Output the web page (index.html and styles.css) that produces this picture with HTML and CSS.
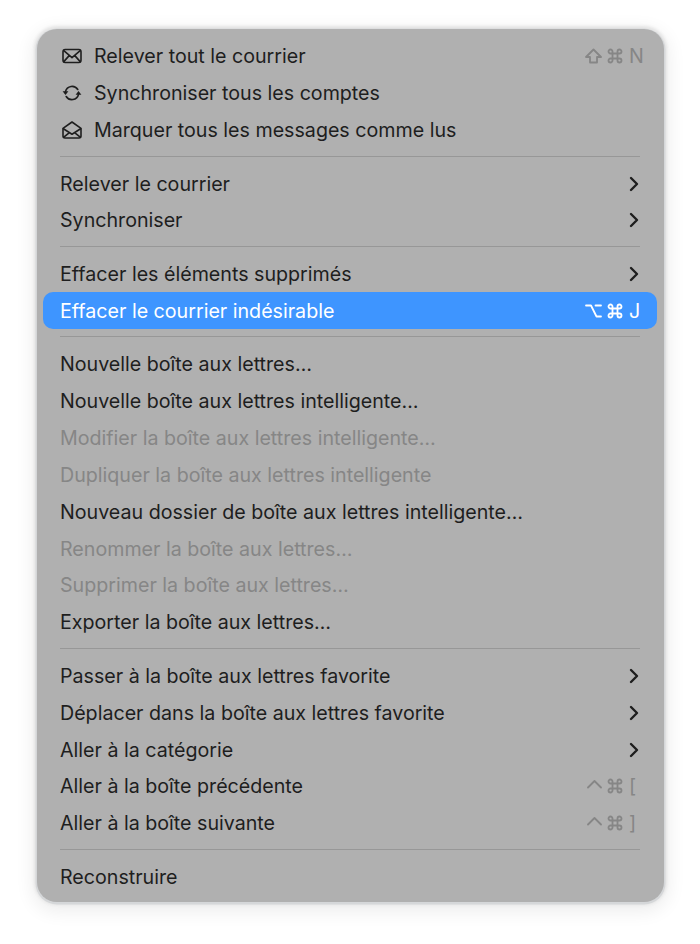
FILE: index.html
```html
<!DOCTYPE html>
<html lang="fr">
<head>
    <meta charset="UTF-8">
    <meta name="viewport" content="width=device-width, initial-scale=1.0">
    <title>Boîte aux lettres</title>
    <link rel="stylesheet" href="styles.css">
</head>
<body>
    <svg class="defs" width="0" height="0">
        <symbol id="cmd" viewBox="0 0 16 16"><path d="M5.500 5.500V3.500a2 2 0 1 0-2 2h9a2 2 0 1 0-2-2v9a2 2 0 1 0 2-2h-9a2 2 0 1 0 2 2z"/></symbol>
        <symbol id="shift" viewBox="0 0 17 16"><path d="M8.500 1.500 16 9h-4v5.500H5V9H1z"/></symbol>
        <symbol id="option" viewBox="0 0 17 16"><path d="M1 2.500h5l5.500 11H16M10.500 2.500H16"/></symbol>
        <symbol id="ctrl" viewBox="0 0 17 16"><path d="M3 9.500 9.500 3 16 9.500"/></symbol>
        <symbol id="chev" viewBox="0 0 10 16"><path d="M2 2l6 6-6 6"/></symbol>
    </svg>
    <div class="menu">
        <div class="item">
            <svg class="icon" viewBox="0 0 20 16"><rect x="1" y="1.500" width="18" height="13" rx="2.200"/><path d="M1.800 2.600 10 9.600l8.200-7M1.800 13.600l5.600-6.200M18.200 13.600l-5.600-6.200"/></svg>
            <span class="label">Relever tout le courrier</span>
            <span class="keys"><svg class="mod"><use href="#shift"/></svg><svg class="cmd"><use href="#cmd"/></svg><span class="key">N</span></span>
        </div>
        <div class="item">
            <svg class="icon" viewBox="0 0 20 18"><path d="M3.500 7.500A6.800 6.800 0 0 1 15.800 5.500M16.500 10.500A6.800 6.800 0 0 1 4.200 12.500"/><path class="solid" d="M.6 7.200h5.800L3.500 11zM19.400 10.800h-5.800L16.500 7z"/></svg>
            <span class="label">Synchroniser tous les comptes</span>
        </div>
        <div class="item">
            <svg class="icon" viewBox="0 0 20 18"><path d="M1 7.400 10 1l9 6.400V15a2 2 0 0 1-2 2H3a2 2 0 0 1-2-2z"/><path d="M1.400 7.800 10 13.200l8.600-5.400M1.800 16.200l5.600-4.600M18.200 16.200l-5.600-4.600"/></svg>
            <span class="label">Marquer tous les messages comme lus</span>
        </div>
        <div class="sep"></div>
        <div class="item">
            <span class="label">Relever le courrier</span>
            <svg class="chevron"><use href="#chev"/></svg>
        </div>
        <div class="item">
            <span class="label">Synchroniser</span>
            <svg class="chevron"><use href="#chev"/></svg>
        </div>
        <div class="sep"></div>
        <div class="item">
            <span class="label">Effacer les éléments supprimés</span>
            <svg class="chevron"><use href="#chev"/></svg>
        </div>
        <div class="item selected">
            <span class="label">Effacer le courrier indésirable</span>
            <span class="keys"><svg class="mod"><use href="#option"/></svg><svg class="cmd"><use href="#cmd"/></svg><span class="key">J</span></span>
        </div>
        <div class="sep"></div>
        <div class="item"><span class="label">Nouvelle boîte aux lettres…</span></div>
        <div class="item"><span class="label">Nouvelle boîte aux lettres intelligente…</span></div>
        <div class="item disabled"><span class="label">Modifier la boîte aux lettres intelligente…</span></div>
        <div class="item disabled"><span class="label">Dupliquer la boîte aux lettres intelligente</span></div>
        <div class="item"><span class="label">Nouveau dossier de boîte aux lettres intelligente…</span></div>
        <div class="item disabled"><span class="label">Renommer la boîte aux lettres…</span></div>
        <div class="item disabled"><span class="label">Supprimer la boîte aux lettres…</span></div>
        <div class="item"><span class="label">Exporter la boîte aux lettres…</span></div>
        <div class="sep"></div>
        <div class="item">
            <span class="label">Passer à la boîte aux lettres favorite</span>
            <svg class="chevron"><use href="#chev"/></svg>
        </div>
        <div class="item">
            <span class="label">Déplacer dans la boîte aux lettres favorite</span>
            <svg class="chevron"><use href="#chev"/></svg>
        </div>
        <div class="item">
            <span class="label">Aller à la catégorie</span>
            <svg class="chevron"><use href="#chev"/></svg>
        </div>
        <div class="item">
            <span class="label">Aller à la boîte précédente</span>
            <span class="keys"><svg class="mod"><use href="#ctrl"/></svg><svg class="cmd"><use href="#cmd"/></svg><span class="key">[</span></span>
        </div>
        <div class="item">
            <span class="label">Aller à la boîte suivante</span>
            <span class="keys"><svg class="mod"><use href="#ctrl"/></svg><svg class="cmd"><use href="#cmd"/></svg><span class="key">]</span></span>
        </div>
        <div class="sep"></div>
        <div class="item"><span class="label">Reconstruire</span></div>
    </div>
</body>
</html>
```

FILE: styles.css
```css
body {
    margin: 0;
    padding: 29px 36px 42px 37px;
    background-color: #fff;
    font-family: Inter, "Noto Sans", sans-serif;
    color: #1e1e1e;
}
.defs {
    position: absolute;
}
.menu {
    background-color: #b0b0b0;
    border-radius: 20px;
    padding: 9px 7px 7px 6px;
    box-shadow: 0 1px 0 1.5px #d5d7d9, 0 0 3px 3px #e4e4e4, 0 5px 18px 5px rgba(0, 0, 0, 0.07);
}
.item {
    display: flex;
    align-items: center;
    height: 36.85px;
    padding: 0 15px 0 17px;
    font-size: 19.65px;
    border-radius: 10px;
}
.label {
    flex: 1;
}
.icon {
    width: 20px;
    height: 18px;
    margin: 0 12px 0 2px;
    fill: none;
    stroke: #1e1e1e;
    stroke-width: 1.6;
    stroke-linejoin: round;
    stroke-linecap: round;
}
.icon .solid {
    fill: #1e1e1e;
    stroke: none;
}
.chevron {
    width: 10px;
    height: 16px;
    margin-right: 3px;
    fill: none;
    stroke: #1e1e1e;
    stroke-width: 2.4;
    stroke-linejoin: round;
    stroke-linecap: round;
}
.keys {
    display: flex;
    align-items: center;
    gap: 5px;
    color: #868686;
}
.mod, .cmd {
    height: 16px;
    fill: none;
    stroke: currentColor;
    stroke-width: 1.8;
    stroke-linejoin: round;
    stroke-linecap: round;
}
.mod {
    width: 17px;
}
.cmd {
    width: 16px;
}
.key {
    width: 13px;
    margin-left: 1px;
}
.selected {
    background-color: #3e95ff;
    color: #fff;
}
.selected .keys {
    color: #fff;
}
.disabled {
    color: #868686;
}
.sep {
    height: 1px;
    background-color: #979797;
    margin: 7px 17px 8.700px 17px;
}
```
